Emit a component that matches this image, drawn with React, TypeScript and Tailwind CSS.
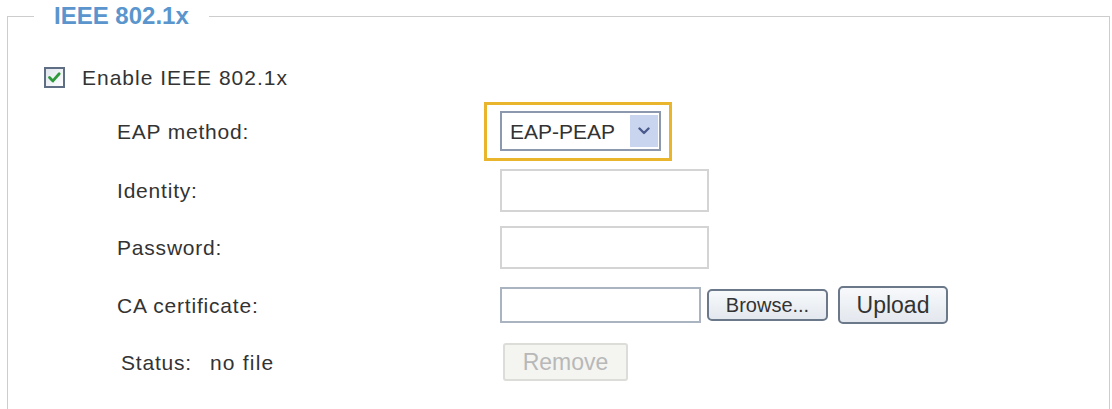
import React from "react";

const font = { fontFamily: '"Liberation Sans", Arial, sans-serif' };

function CheckBox() {
  return (
    <svg width="21" height="21" viewBox="0 0 21 21" className="shrink-0">
      <defs>
        <linearGradient id="cbg" x1="0" y1="0" x2="1" y2="1">
          <stop offset="0" stopColor="#dfe5ec" />
          <stop offset="1" stopColor="#ffffff" />
        </linearGradient>
      </defs>
      <rect x="1" y="1" width="19" height="19" fill="url(#cbg)" stroke="#5f6d85" strokeWidth="2" />
      <path d="M5.5 10.6 L8.9 13.9 L15.2 6.8" fill="none" stroke="#2e9a3c" strokeWidth="2.8" strokeLinecap="round" strokeLinejoin="round" />
    </svg>
  );
}

function Label({ children }: { children: React.ReactNode }) {
  return (
    <div className="w-[383px] shrink-0 text-[21px] tracking-[0.8px] text-[#333333] leading-none">
      {children}
    </div>
  );
}

export default function App() {
  return (
    <div className="w-[1112px] h-[409px] overflow-hidden bg-white" style={font}>
      <fieldset className="ml-[7px] mt-[2px] w-[1103px] h-[440px] border border-[#cdcdcd] p-0 m-0">
        <legend className="ml-[26px] px-[20px] text-[24px] font-bold leading-[28px] text-[#5a95cd]">
          IEEE 802.1x
        </legend>
        <div className="pt-[27px]">
          <div className="flex items-center h-[40px] pl-[36px]">
            <CheckBox />
            <span className="ml-[17px] text-[21px] tracking-[1px] text-[#333333] leading-none">
              Enable IEEE 802.1x
            </span>
          </div>

          <div className="flex items-center h-[44px] pl-[109px] mt-[12px]">
            <Label>EAP method:</Label>
            <div className="relative">
              <div className="absolute -left-[16px] -top-[9px] -right-[11px] -bottom-[10px] border-[3px] border-[#e8b52c]" />
              <div className="flex items-center w-[161px] h-[40px] border-2 border-[#8b98ad] bg-white pl-[8px] pr-[1px]">
                <span className="text-[21px] text-[#333] leading-none">EAP-PEAP</span>
                <div className="ml-auto w-[28px] h-[32px] bg-[#c9d5ee] flex items-center justify-center">
                  <svg width="12" height="8" viewBox="0 0 12 8">
                    <path d="M1.5 1.5 L6 6 L10.5 1.5" fill="none" stroke="#4a5a8c" strokeWidth="2.4" strokeLinecap="round" strokeLinejoin="round" />
                  </svg>
                </div>
              </div>
            </div>
          </div>

          <div className="flex items-center h-[44px] pl-[109px] mt-[15px]">
            <Label>Identity:</Label>
            <div className="w-[209px] h-[43px] border-2 border-[#d4d4d4] bg-white" />
          </div>

          <div className="flex items-center h-[44px] pl-[109px] mt-[13px]">
            <Label>Password:</Label>
            <div className="w-[209px] h-[43px] border-2 border-[#d4d4d4] bg-white" />
          </div>

          <div className="flex items-center h-[44px] pl-[109px] mt-[14px]">
            <Label>CA certificate:</Label>
            <div className="w-[201px] h-[36px] border-2 border-[#aab4c0] bg-white" />
            <button className="ml-[6px] w-[121px] h-[32px] rounded-[5px] border-2 border-[#6b7889] bg-gradient-to-b from-[#f7f9fb] to-[#e3e8ee] text-[20px] text-[#333] leading-none">
              Browse...
            </button>
            <button className="ml-[10px] w-[110px] h-[38px] rounded-[5px] border-2 border-[#6b7889] bg-gradient-to-b from-[#f7f9fb] to-[#e3e8ee] text-[23px] text-[#333] leading-none">
              Upload
            </button>
          </div>

          <div className="flex items-center h-[44px] pl-[113px] mt-[13px]">
            <div className="w-[382px] shrink-0 flex text-[21px] tracking-[0.8px] text-[#333333] leading-none">
              <span>Status:</span>
              <span className="ml-[18px] tracking-[1.2px]">no file</span>
            </div>
            <button disabled className="w-[125px] h-[38px] rounded-[3px] border-2 border-[#dcdcd8] bg-[#f4f4f1] text-[23px] text-[#b8b8b8] leading-none">
              Remove
            </button>
          </div>
        </div>
      </fieldset>
    </div>
  );
}
